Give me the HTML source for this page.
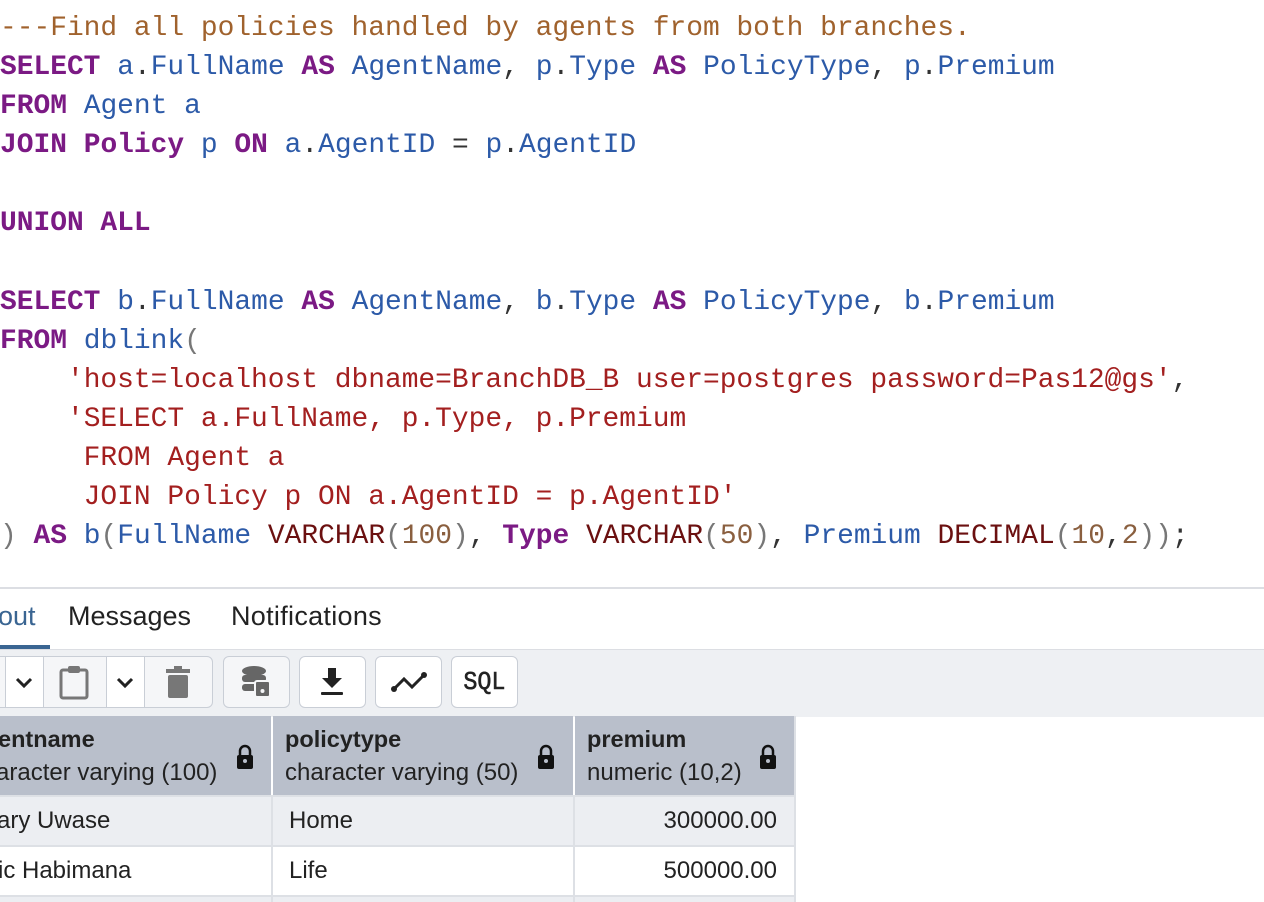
<!DOCTYPE html>
<html><head><meta charset="utf-8"><style>
body{margin:0;width:1264px;height:902px;overflow:hidden;background:#fff;position:relative;font-family:"Liberation Sans",sans-serif}
pre{position:absolute;left:0;top:9px;margin:0;font-family:"Liberation Mono",monospace;font-size:27.9px;line-height:39.1px;color:#333}
.c{color:#a0622d}.k{color:#7b1a84;font-weight:bold}.i{color:#2c5aa8}.s{color:#a31f1f}.t{color:#6b1010}.n{color:#8a5f3f}.p{color:#777}
.abs{position:absolute}
.btn{position:absolute;top:656px;height:52px;border:1.5px solid #c9ced6;border-radius:6px;background:#fff;box-sizing:border-box;display:flex;align-items:center;justify-content:center}
.hd{position:absolute;top:716px;height:79px;background:#b9bfcb}
.hn{position:absolute;top:726px;font-weight:bold;font-size:23.5px;color:#222}
.ht{position:absolute;top:759px;font-size:24px;color:#222}
.cell{position:absolute;font-size:24px;color:#222}
.tab{position:absolute;top:601px;font-size:27px;color:#222}
</style></head><body>
<pre><span class="c">---Find all policies handled by agents from both branches.</span>
<span class="k">SELECT</span> <span class="i">a</span>.<span class="i">FullName</span> <span class="k">AS</span> <span class="i">AgentName</span>, <span class="i">p</span>.<span class="i">Type</span> <span class="k">AS</span> <span class="i">PolicyType</span>, <span class="i">p</span>.<span class="i">Premium</span>
<span class="k">FROM</span> <span class="i">Agent</span> <span class="i">a</span>
<span class="k">JOIN</span> <span class="k">Policy</span> <span class="i">p</span> <span class="k">ON</span> <span class="i">a</span>.<span class="i">AgentID</span> = <span class="i">p</span>.<span class="i">AgentID</span>

<span class="k">UNION ALL</span>

<span class="k">SELECT</span> <span class="i">b</span>.<span class="i">FullName</span> <span class="k">AS</span> <span class="i">AgentName</span>, <span class="i">b</span>.<span class="i">Type</span> <span class="k">AS</span> <span class="i">PolicyType</span>, <span class="i">b</span>.<span class="i">Premium</span>
<span class="k">FROM</span> <span class="i">dblink</span><span class="p">(</span>
    <span class="s">'host=localhost dbname=BranchDB_B user=postgres password=Pas12@gs'</span>,
    <span class="s">'SELECT a.FullName, p.Type, p.Premium</span>
<span class="s">     FROM Agent a</span>
<span class="s">     JOIN Policy p ON a.AgentID = p.AgentID'</span>
<span class="p">)</span> <span class="k">AS</span> <span class="i">b</span><span class="p">(</span><span class="i">FullName</span> <span class="t">VARCHAR</span><span class="p">(</span><span class="n">100</span><span class="p">)</span>, <span class="k">Type</span> <span class="t">VARCHAR</span><span class="p">(</span><span class="n">50</span><span class="p">)</span>, <span class="i">Premium</span> <span class="t">DECIMAL</span><span class="p">(</span><span class="n">10</span>,<span class="n">2</span><span class="p">))</span>;</pre>

<div class="abs" style="left:0;top:587px;width:1264px;height:2px;background:#dcdee3"></div>
<div class="tab" style="left:-2px;color:#3a6592">out</div>
<div class="tab" style="left:68px">Messages</div>
<div class="tab" style="left:231px;letter-spacing:0.3px">Notifications</div>
<div class="abs" style="left:0;top:645px;width:50px;height:4px;background:#3a6592"></div>
<div class="abs" style="left:0;top:649px;width:1264px;height:67px;background:#eef0f3;border-top:1.5px solid #dcdee3"></div>

<div class="btn" style="left:-10px;width:223px;background:#f5f6f8"></div>
<div class="abs" style="left:5px;top:657px;width:37px;height:50px;background:#fff;border-left:1.5px solid #c9ced6;border-right:1.5px solid #c9ced6"></div>
<div class="abs" style="left:106px;top:657px;width:37px;height:50px;background:#fff;border-left:1.5px solid #c9ced6;border-right:1.5px solid #c9ced6"></div>
<svg class="abs" style="left:14px;top:676px" width="20" height="14"><path d="M3 3l7 7 7-7" stroke="#222" stroke-width="3" fill="none"/></svg>
<svg class="abs" style="left:115px;top:676px" width="20" height="14"><path d="M3 3l7 7 7-7" stroke="#222" stroke-width="3" fill="none"/></svg>
<svg class="abs" style="left:59px;top:664px" width="30" height="36"><rect x="2" y="6" width="26" height="28" rx="2" fill="none" stroke="#777" stroke-width="3"/><rect x="9" y="2" width="12" height="7" rx="2" fill="#777"/></svg>
<svg class="abs" style="left:164px;top:666px" width="30" height="34"><rect x="2" y="3" width="24" height="4" fill="#777"/><rect x="10" y="0" width="8" height="4" fill="#777"/><rect x="4" y="9" width="20" height="23" rx="2" fill="#777"/></svg>

<div class="btn" style="left:223px;width:67px;background:#f5f6f8"></div>
<svg class="abs" style="left:240px;top:665px" width="32" height="34"><ellipse cx="14" cy="6" rx="12" ry="5" fill="#666"/><rect x="2" y="10" width="24" height="7" rx="3" fill="#666"/><rect x="2" y="19" width="24" height="7" rx="3" fill="#666"/><rect x="15" y="16" width="15" height="16" rx="2" fill="#666" stroke="#f5f6f8" stroke-width="2"/><circle cx="22.5" cy="26" r="2" fill="#f5f6f8"/></svg>
<div class="btn" style="left:299px;width:67px"></div>
<svg class="abs" style="left:319px;top:666px" width="26" height="32"><path d="M9 2h8v10h6l-10 10-10-10h6z" fill="#222"/><rect x="2" y="26" width="22" height="3" rx="1" fill="#222"/></svg>
<div class="btn" style="left:375px;width:67px"></div>
<svg class="abs" style="left:390px;top:670px" width="38" height="26"><path d="M4 19l10-10 8 8 12-12" stroke="#222" stroke-width="3" fill="none"/><circle cx="4" cy="19" r="3" fill="#222"/><circle cx="34" cy="5" r="3" fill="#222"/></svg>
<div class="btn" style="left:451px;width:67px;font-family:'Liberation Mono',monospace;font-size:26px;color:#222;-webkit-text-stroke:0.6px #222"><span style="display:inline-block;transform:scaleX(0.9)">SQL</span></div>

<div class="hd" style="left:0;width:271px"></div>
<div class="hd" style="left:273px;width:300px"></div>
<div class="hd" style="left:575px;width:219px"></div>
<div class="abs" style="left:0;top:795px;width:794px;height:50px;background:#eceef2"></div>
<div class="abs" style="left:0;top:845px;width:794px;height:50px;background:#fff"></div>
<div class="abs" style="left:0;top:795px;width:794px;height:2px;background:#dde0e5"></div>
<div class="abs" style="left:0;top:845px;width:794px;height:2px;background:#dde0e5"></div>
<div class="abs" style="left:0;top:895px;width:794px;height:2px;background:#dde0e5"></div>
<div class="abs" style="left:0;top:897px;width:794px;height:5px;background:#eceef2"></div>
<div class="abs" style="left:271px;top:795px;width:2px;height:107px;background:#dde0e5"></div>
<div class="abs" style="left:573px;top:795px;width:2px;height:107px;background:#dde0e5"></div>
<div class="abs" style="left:794px;top:716px;width:2px;height:186px;background:#dde0e5"></div>

<div class="hn" style="left:-2px">entname</div><div class="ht" style="left:-4px">aracter varying (100)</div>
<div class="hn" style="left:285px">policytype</div><div class="ht" style="left:285px">character varying (50)</div>
<div class="hn" style="left:587px">premium</div><div class="ht" style="left:587px">numeric (10,2)</div>
<svg class="abs" style="left:235px;top:744px" width="20" height="26"><path d="M5 11V7a5 5 0 0 1 10 0v4" stroke="#111" stroke-width="2.5" fill="none"/><rect x="2" y="11" width="16" height="14" rx="2" fill="#111"/><circle cx="10" cy="17" r="2" fill="#b9bfcb"/></svg>
<svg class="abs" style="left:536px;top:744px" width="20" height="26"><path d="M5 11V7a5 5 0 0 1 10 0v4" stroke="#111" stroke-width="2.5" fill="none"/><rect x="2" y="11" width="16" height="14" rx="2" fill="#111"/><circle cx="10" cy="17" r="2" fill="#b9bfcb"/></svg>
<svg class="abs" style="left:758px;top:744px" width="20" height="26"><path d="M5 11V7a5 5 0 0 1 10 0v4" stroke="#111" stroke-width="2.5" fill="none"/><rect x="2" y="11" width="16" height="14" rx="2" fill="#111"/><circle cx="10" cy="17" r="2" fill="#b9bfcb"/></svg>

<div class="cell" style="left:-3px;top:807px">ary Uwase</div>
<div class="cell" style="left:289px;top:807px">Home</div>
<div class="cell" style="left:575px;width:202px;text-align:right;top:807px">300000.00</div>
<div class="cell" style="left:-2px;top:857px">ic Habimana</div>
<div class="cell" style="left:289px;top:857px">Life</div>
<div class="cell" style="left:575px;width:202px;text-align:right;top:857px">500000.00</div>
</body></html>
